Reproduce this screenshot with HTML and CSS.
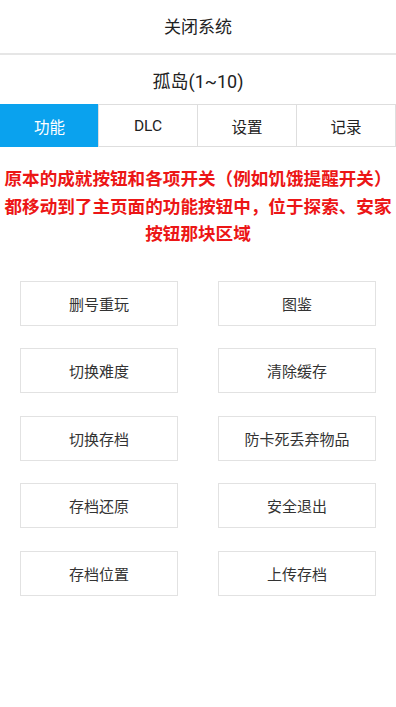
FILE: index.html
```html
<!DOCTYPE html>
<html lang="zh">
<head>
<meta charset="utf-8">
<link rel="stylesheet" href="styles.css">
</head>
<body>
<div class="page">
  <header class="topbar">关闭系统</header>
  <div class="title">孤岛(1~10)</div>
  <nav class="tabs">
    <div class="tab active">功能</div>
    <div class="tab">DLC</div>
    <div class="tab">设置</div>
    <div class="tab">记录</div>
  </nav>
  <p class="notice">原本的成就按钮和各项开关（例如饥饿提醒开关）都移动到了主页面的功能按钮中，位于探索、安家按钮那块区域</p>
  <div class="grid">
    <div class="btn">删号重玩</div>
    <div class="btn">图鉴</div>
    <div class="btn">切换难度</div>
    <div class="btn">清除缓存</div>
    <div class="btn">切换存档</div>
    <div class="btn">防卡死丢弃物品</div>
    <div class="btn">存档还原</div>
    <div class="btn">安全退出</div>
    <div class="btn">存档位置</div>
    <div class="btn">上传存档</div>
  </div>
</div>
</body>
</html>
```

FILE: styles.css
```css
* { box-sizing: border-box; margin: 0; padding: 0; }
html, body { background: #fff; }
body {
  font-family: Roboto, "Noto Sans CJK SC", "Noto Sans", sans-serif;
  color: #222;
  width: 396px;
  height: 707px;
  overflow: hidden;
}
.topbar {
  height: 55px;
  display: flex;
  align-items: center;
  justify-content: center;
  font-size: 17px;
  color: #222;
  border-bottom: 2px solid #e6e6e6;
  padding-bottom: 2px;
}
.title {
  height: 49px;
  display: flex;
  align-items: center;
  justify-content: center;
  font-size: 18px;
  color: #222;
  padding-top: 1px;
}
.tabs {
  display: grid;
  grid-template-columns: 99px 99px 99px 99px;
  height: 43px;
}
.tab {
  display: flex;
  align-items: center;
  justify-content: center;
  font-size: 15.5px;
  color: #222;
  border: 1px solid #dedede;
  margin-left: -1px;
}
.tab:first-child { margin-left: 0; }
.tab.active {
  background: #0aa2ee;
  color: #fff;
  border-color: #0aa2ee;
}
.notice {
  margin-top: 19px;
  padding: 0;
  font-size: 17.6px;
  line-height: 27.5px;
  font-weight: 700;
  color: #ec1616;
  text-align: center;
}
.grid {
  margin-top: 32px;
  padding: 0 20px;
  display: grid;
  grid-template-columns: 158px 158px;
  column-gap: 40px;
  row-gap: 22.5px;
}
.btn {
  height: 45px;
  border: 1.5px solid #e2e2e2;
  display: flex;
  align-items: center;
  justify-content: center;
  font-size: 15px;
  color: #333;
}
```
